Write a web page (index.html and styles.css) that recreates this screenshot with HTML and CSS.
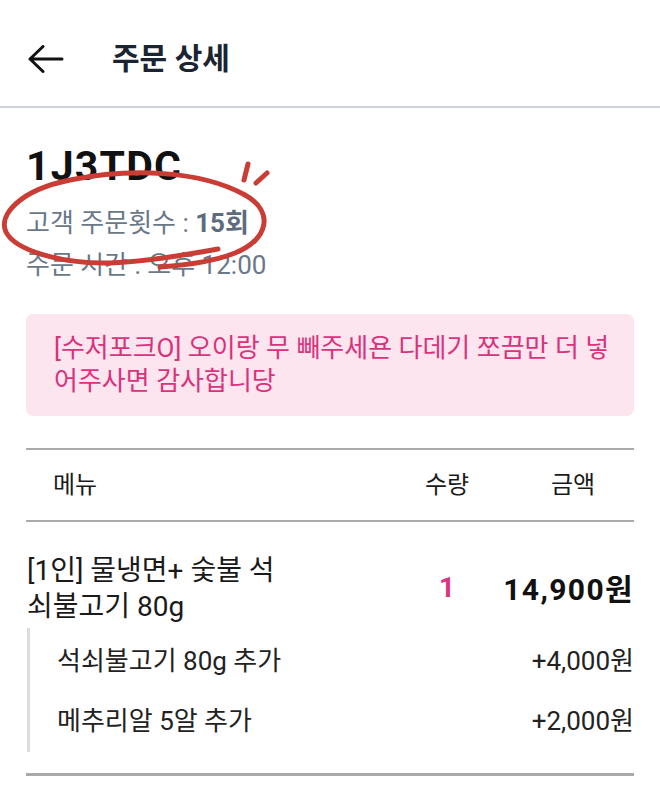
FILE: index.html
```html
<!DOCTYPE html>
<html lang="ko">
<head>
<meta charset="utf-8">
<title>주문 상세</title>
<link rel="stylesheet" href="styles.css">
</head>
<body>
<div class="page">
  <header class="topbar">
    <span class="back" aria-label="뒤로">
      <svg width="36" height="28" viewBox="0 0 36 28" fill="none" stroke="#111" stroke-width="3" stroke-linecap="round" stroke-linejoin="round">
        <path d="M34 14 H2 M15 1.5 L2 14 L15 26.5"/>
      </svg>
    </span>
    <h1 class="title">주문 상세</h1>
  </header>
  <main class="content">
    <section class="order-info">
      <div class="order-id">1J3TDC</div>
      <p class="meta meta-first">고객 주문횟수 : <strong>15회</strong></p>
      <p class="meta">주문 시간 : 오후 12:00</p>
      <svg class="scribble" width="290" height="130" viewBox="0 150 290 130" fill="none" stroke="#c93d35" stroke-width="5" stroke-linecap="round">
        <path d="M218 249 C180 256 140 262 110 263 C60 264 15 250 6 232 C-2 215 20 190 70 180 C130 168 200 170 245 195 C275 212 268 240 235 253 C215 261 190 265 160 267"/>
        <path d="M248 164 L244 180"/>
        <path d="M267 173 L256 183"/>
      </svg>
    </section>
    <div class="note">[수저포크O] 오이랑 무 빼주세욘 다데기 쪼끔만 더 넣어주사면 감사합니당</div>
    <section class="items">
      <div class="items-head">
        <span class="col-menu">메뉴</span>
        <span class="col-qty">수량</span>
        <span class="col-price">금액</span>
      </div>
      <div class="item">
        <div class="item-name">[1인] 물냉면+ 숯불 석쇠불고기 80g</div>
        <div class="item-qty">1</div>
        <div class="item-price">14,900원</div>
      </div>
      <div class="options">
        <div class="option"><span>석쇠불고기 80g 추가</span><span>+4,000원</span></div>
        <div class="option"><span>메추리알 5알 추가</span><span>+2,000원</span></div>
      </div>
    </section>
  </main>
</div>
</body>
</html>
```
FILE: styles.css
```css
* { box-sizing: border-box; }
html, body { margin: 0; padding: 0; background: #fff; }
body {
  font-family: Roboto, "Noto Sans CJK KR", sans-serif;
  color: #1a1a1a;
  width: 660px;
}
.page { width: 660px; }

.topbar {
  height: 108px;
  border-bottom: 2px solid #cfd3db;
  display: flex;
  align-items: center;
  padding: 12px 0 0 28px;
}
.back { display: flex; width: 36px; height: 28px; }
.title {
  margin: 0 0 0 48px;
  font-size: 30px;
  font-weight: 700;
  color: #1b2431;
  line-height: 40px;
}

.content { padding: 0 26px; }

.order-info {
  position: relative;
  padding-top: 34px;
}
.order-id {
  font-size: 41px;
  font-weight: 700;
  line-height: 48px;
  letter-spacing: 1.2px;
  color: #111;
}
.meta {
  margin: 0;
  font-size: 26px;
  line-height: 42px;
  color: #6a7888;
}
.meta-first { margin-top: 12px; }
.meta strong { font-weight: 700; color: #5d6c7d; }
.scribble {
  position: absolute;
  left: -26px;
  top: 42px;
}

.note {
  margin-top: 28px;
  background: #fce5ef;
  border-radius: 7px;
  padding: 18px 18px 18px 28px;
  font-size: 26px;
  line-height: 33px;
  color: #d8337c;
}

.items {
  margin-top: 32px;
  padding-bottom: 21px;
  border-bottom: 3px solid #a9a9a9;
}
.items-head {
  display: grid;
  grid-template-columns: 1fr 130px 122px;
  align-items: center;
  height: 74px;
  padding-bottom: 5px;
  border-top: 2px solid #ababab;
  border-bottom: 2px solid #ababab;
  font-size: 24px;
  color: #1a1a1a;
}
.col-menu { padding-left: 27px; }
.col-qty, .col-price { text-align: center; }

.item {
  display: grid;
  grid-template-columns: 1fr 130px 122px;
  align-items: center;
  padding: 31px 0 3px;
}
.item-name {
  max-width: 262px;
  font-size: 28px;
  line-height: 36px;
  color: #1a1a1a;
  padding-left: 1px;
}
.item-qty {
  text-align: center;
  font-size: 28px;
  font-weight: 700;
  color: #dc3382;
  padding-bottom: 4px;
}
.item-price {
  justify-self: end;
  white-space: nowrap;
  font-size: 30px;
  font-weight: 700;
  letter-spacing: 1.4px;
  color: #111;
  padding-bottom: 4px;
}

.options {
  margin-left: 1px;
  border-left: 3px solid #dcdcdc;
  padding: 2px 0 2px 27px;
}
.option {
  height: 60px;
  display: flex;
  align-items: center;
  justify-content: space-between;
  font-size: 26px;
  color: #222;
  padding-bottom: 3px;
}
```
